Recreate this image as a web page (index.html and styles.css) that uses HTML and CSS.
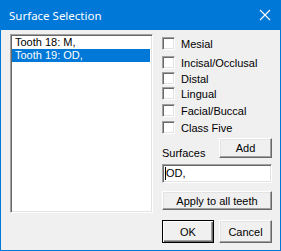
FILE: index.html
```html
<!DOCTYPE html>
<html lang="en">
<head>
    <meta charset="UTF-8">
    <title>Surface Selection</title>
    <link rel="stylesheet" href="styles.css">
</head>
<body>
    <div class="window">
        <!-- title bar -->
        <div class="titlebar">
            <span class="title">Surface Selection</span>
            <svg class="close" width="12" height="12" viewBox="0 0 12 12">
                <path d="M1 1 L11 11 M11 1 L1 11" stroke="#fff" stroke-width="1.1" fill="none"/>
            </svg>
        </div>
        <div class="content">
            <div class="listbox">
                <div class="item">Tooth 18: M,</div>
                <div class="item selected">Tooth 19: OD,</div>
            </div>
            <div class="side">
                <div class="checks">
                    <label class="check"><span class="box"></span>Mesial</label>
                    <label class="check"><span class="box"></span>Incisal/Occlusal</label>
                    <label class="check"><span class="box"></span>Distal</label>
                    <label class="check"><span class="box"></span>Lingual</label>
                    <label class="check"><span class="box"></span>Facial/Buccal</label>
                    <label class="check"><span class="box"></span>Class Five</label>
                </div>
                <div class="add-row">
                    <span class="label">Surfaces</span>
                    <button class="btn add">Add</button>
                </div>
                <div class="textbox"><span class="caret"></span>OD,</div>
                <button class="btn apply">Apply to all teeth</button>
                <div class="actions">
                    <button class="btn default">OK</button>
                    <button class="btn">Cancel</button>
                </div>
            </div>
        </div>
    </div>
</body>
</html>
```

FILE: styles.css
```css
* {
    box-sizing: border-box;
}
body {
    margin: 0;
    font-family: "Liberation Sans", Arial, sans-serif;
    font-size: 11px;
    color: #000;
}
.window {
    width: 281px;
    height: 251px;
    background-color: #f0f0f0;
    border: 1px solid #0078d7;
    border-top: none;
}
.titlebar {
    height: 30px;
    background-color: #0078d7;
    display: flex;
    align-items: center;
    padding: 0 9px 0 8px;
}
.title {
    color: #fff;
    font-family: "Noto Sans", sans-serif;
    font-size: 11.5px;
    flex: 1;
    margin-top: 1px;
}
.content {
    display: flex;
    padding: 4px 0 0 9px;
}
/* 列表框 */
.listbox {
    width: 143px;
    height: 179px;
    background-color: #fff;
    border-style: solid;
    border-width: 1px;
    border-color: #a0a0a0 #fff #fff #a0a0a0;
    box-shadow: inset 1px 1px 0 #696969, inset -1px -1px 0 #e3e3e3;
    padding: 1px 2px 1px 1px;
}
.item {
    height: 13px;
    line-height: 13px;
    padding-left: 3px;
    white-space: nowrap;
}
.item.selected {
    background-color: #0078d7;
    color: #fff;
}
.side {
    width: 110px;
    margin-left: 9px;
    display: flex;
    flex-direction: column;
}
.checks {
    padding-top: 3px;
    display: flex;
    flex-direction: column;
}
.check {
    display: flex;
    align-items: center;
    height: 13px;
    margin-bottom: 4px;
    white-space: nowrap;
}
/* 对话框单位造成的不均匀间距 */
.check:nth-child(2) {
    margin-top: 2px;
}
.check:nth-child(3) {
    margin-top: -1px;
}
.check:nth-child(4) {
    margin-top: -2px;
}
.box {
    width: 13px;
    height: 13px;
    background-color: #fff;
    border-style: solid;
    border-width: 1px;
    border-color: #a0a0a0 #fff #fff #a0a0a0;
    box-shadow: inset 1px 1px 0 #696969, inset -1px -1px 0 #e3e3e3;
    margin-right: 6px;
}
.add-row {
    display: flex;
    justify-content: space-between;
    align-items: flex-end;
    margin-top: 0;
}
.label {
    line-height: 13px;
    margin-bottom: -2px;
}
.btn {
    font-family: "Liberation Sans", Arial, sans-serif;
    font-size: 11px;
    color: #000;
    background-color: #f0f0f0;
    border-style: solid;
    border-width: 1px;
    border-color: #fff #696969 #696969 #fff;
    box-shadow: inset -1px -1px 0 #a0a0a0, inset 1px 1px 0 #e3e3e3;
    padding: 0;
    margin: 0;
}
.add {
    width: 53px;
    height: 20px;
}
.textbox {
    margin-top: 6px;
    height: 19px;
    background-color: #fff;
    border-style: solid;
    border-width: 1px;
    border-color: #a0a0a0 #fff #fff #a0a0a0;
    box-shadow: inset 1px 1px 0 #696969, inset -1px -1px 0 #e3e3e3;
    padding: 2px 0 0 2px;
    line-height: 13px;
    display: flex;
    align-items: flex-start;
}
.caret {
    width: 1px;
    height: 13px;
    background-color: #000;
}
.apply {
    margin-top: 8px;
    height: 19px;
    width: 110px;
}
.actions {
    display: flex;
    justify-content: space-between;
    margin-top: 10px;
}
.actions .btn {
    width: 53px;
    height: 23px;
}
.btn.default {
    width: 52px;
    border-color: #000;
    box-shadow: inset 1px 1px 0 #fff, inset -1px -1px 0 #696969, inset -2px -2px 0 #a0a0a0;
}
```
